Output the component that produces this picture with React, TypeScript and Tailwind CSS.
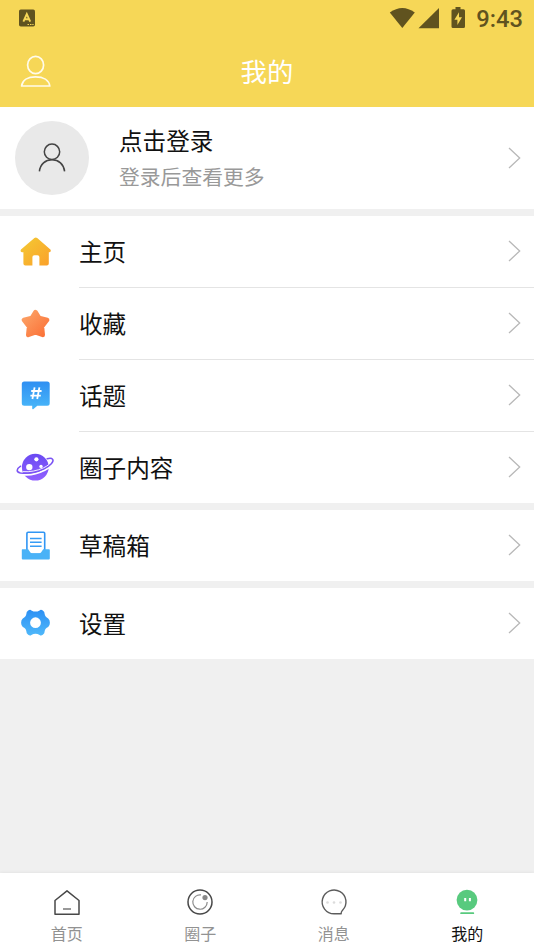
import type { ReactNode } from "react"

function Chevron() {
  return (
    <svg className="mr-[13px] mb-px shrink-0" width="14" height="24" viewBox="0 0 14 24" fill="none" stroke="#b8b8b8" strokeWidth="1.3">
      <path d="M2 2 L12.7 12 L2 22" />
    </svg>
  )
}

function HomeIcon() {
  return (
    <svg width="40" height="40" viewBox="0 0 40 40">
      <defs>
        <linearGradient id="home" x1="0" y1="0" x2="1" y2="1">
          <stop offset="0" stopColor="#f3cb34" />
          <stop offset="1" stopColor="#fb9f2a" />
        </linearGradient>
      </defs>
      <path
        fill="url(#home)"
        d="M18.4 6 Q19.8 4.8 21.2 6 L34.4 17.4 Q35.6 19.8 33.4 20.3 L32.8 20.3 V31.5 Q32.8 33.5 30.8 33.5 H23.4 V25 Q23.4 23.2 21.4 23.2 H18.4 Q16.4 23.2 16.4 25 V33.5 H9.4 Q7.4 33.5 7.4 31.5 V20.3 H6 Q3.8 19.8 5 17.4 Z"
      />
    </svg>
  )
}

function StarIcon() {
  return (
    <svg width="40" height="40" viewBox="0 0 40 40">
      <defs>
        <linearGradient id="star" x1="0" y1="0" x2="1" y2="1">
          <stop offset="0" stopColor="#fca468" />
          <stop offset="1" stopColor="#fb7036" />
        </linearGradient>
      </defs>
      <path
        fill="url(#star)"
        stroke="url(#star)"
        strokeWidth="4.4"
        strokeLinejoin="round"
        d="M19.5 8 L23.2 14 L31.2 16 L26 22.6 L26.8 31 L19.5 28.4 L12.2 31 L13 22.6 L7.8 16 L15.8 14 Z"
      />
    </svg>
  )
}

function TopicIcon() {
  return (
    <svg width="40" height="40" viewBox="0 0 40 40">
      <defs>
        <linearGradient id="topic" x1="0" y1="0" x2="0" y2="1">
          <stop offset="0" stopColor="#2f8ff2" />
          <stop offset="1" stopColor="#4ab8f9" />
        </linearGradient>
      </defs>
      <path
        fill="url(#topic)"
        d="M8.3 5.5 H31.2 Q33.7 5.5 33.7 8 V27.2 Q33.7 29.7 31.2 29.7 H21.3 L17.2 33.2 Q16.2 33.6 16.2 32.5 V29.7 H8.3 Q5.8 29.7 5.8 27.2 V8 Q5.8 5.5 8.3 5.5 Z"
      />
      <path d="M18.6 11.4 L16.4 23 M23.4 11.4 L21.2 23 M15.2 15 H25.6 M14.4 19.6 H24.8" stroke="#fff" strokeWidth="1.8" fill="none" />
    </svg>
  )
}

function PlanetIcon() {
  return (
    <svg width="40" height="40" viewBox="0 0 40 40">
      <defs>
        <linearGradient id="planet" x1="0" y1="0" x2="0" y2="1">
          <stop offset="0" stopColor="#6a4af2" />
          <stop offset="1" stopColor="#9160ff" />
        </linearGradient>
      </defs>
      <circle cx="19.3" cy="19.2" r="13.4" fill="url(#planet)" />
      {/* gap between the planet and its ring */}
      <path d="M4.4 26.2 C12 27.6 21 26 28.6 22.2 C31 21 33 19.6 34.6 18" fill="none" stroke="#fff" strokeWidth="2" />
      <path
        d="M4.6 18.2 C0.4 21 -0.2 24 4.4 24.9 C11 26 20 24.6 28 20.8 C34.4 17.7 38.2 13.4 36.7 11.4 C35.8 10.2 33.6 10 31.2 10.8"
        fill="none"
        stroke="#7b54f4"
        strokeWidth="1.5"
        strokeLinecap="round"
      />
      <path d="M6.8 23.6 C14 24.2 21 22.8 27.4 19.9 C29.5 18.9 31.4 17.8 32.8 16.6" fill="none" stroke="#fff" strokeWidth="0.9" />
      <circle cx="13.3" cy="19.1" r="3.2" fill="#fff" />
      <circle cx="20.4" cy="11.3" r="2.1" fill="#fff" />
      <circle cx="25" cy="18.4" r="1.7" fill="#fff" />
    </svg>
  )
}

function DraftIcon() {
  return (
    <svg width="40" height="40" viewBox="0 0 40 40">
      <rect x="10.9" y="6.2" width="17.8" height="22" rx="1.2" fill="#fff" stroke="#3196f4" strokeWidth="1.6" />
      <path d="M14 12.5 H25.6 M14 16.3 H25.6 M14 20.3 H25.6" stroke="#369cf5" strokeWidth="1.6" />
      <path fill="#49b2f7" d="M6.4 23.2 H12.2 L14.4 26.5 Q15 27.2 16 27.2 H23.4 Q24.4 27.2 25 26.5 L27.2 23.2 H33 Q33.8 23.2 33.8 24 V32.4 Q33.8 33.4 32.8 33.4 H6.8 Q5.8 33.4 5.8 32.4 V24 Q5.8 23.2 6.4 23.2 Z" />
    </svg>
  )
}

function GearIcon() {
  return (
    <svg width="40" height="40" viewBox="0 0 40 40">
      <defs>
        <linearGradient id="gear" x1="0" y1="0" x2="0" y2="1">
          <stop offset="0" stopColor="#2c90f4" />
          <stop offset="1" stopColor="#4fb8fa" />
        </linearGradient>
      </defs>
      <path
        fill="url(#gear)"
        fillRule="evenodd"
        d="M12.2 6.6 Q14 5.2 15.4 6.4 Q19.5 8.8 23.6 6.4 Q25 5.2 26.8 6.6 Q28.8 7.8 28.6 9.8 Q29 13.2 32.2 14.4 Q33.9 15.8 33.9 18.7 Q33.9 21.6 32.2 23 Q29 24.2 28.6 27.6 Q28.8 29.6 26.8 30.8 Q25 32.2 23.6 31 Q19.5 28.6 15.4 31 Q14 32.2 12.2 30.8 Q10.2 29.6 10.4 27.6 Q10 24.2 6.8 23 Q5.1 21.6 5.1 18.7 Q5.1 15.8 6.8 14.4 Q10 13.2 10.4 9.8 Q10.2 7.8 12.2 6.6 Z M19.5 13.3 A5.4 5.4 0 1 0 19.5 24.1 A5.4 5.4 0 1 0 19.5 13.3 Z"
      />
    </svg>
  )
}

function Row({ icon, label, line }: { icon: ReactNode; label: string; line?: boolean }) {
  return (
    <div className="flex h-[72px] items-stretch bg-white pl-4">
      <div className="flex w-[63px] items-center">{icon}</div>
      <div className={line ? "flex flex-1 items-center justify-between border-b border-[#e4e4e4]" : "flex flex-1 items-center justify-between border-b border-transparent"}>
        <span className="mb-0.5 text-[23.6px] leading-8 text-[#111]">{label}</span>
        <Chevron />
      </div>
    </div>
  )
}

function Tab({ icon, label, active }: { icon: ReactNode; label: string; active?: boolean }) {
  return (
    <div className="flex flex-1 flex-col items-center pt-[13px]">
      {icon}
      <span className={active ? "mt-[3px] text-[16px] leading-6 text-[#111]" : "mt-[3px] text-[16px] leading-6 text-[#929292]"}>{label}</span>
    </div>
  )
}

export default function App() {
  return (
    <div className="flex h-[950px] w-[534px] flex-col overflow-hidden bg-[#f0f0f0] font-['Noto_Sans_CJK_SC',sans-serif]">
      {/* status bar + title */}
      <header className="h-[107px] bg-[#f6d757]">
        <div className="flex h-9 items-center justify-between pl-[19px] pr-3">
          <svg width="17" height="18" viewBox="0 0 17 18">
            <rect x="0" y="0.5" width="16" height="17" rx="1.8" fill="#60531f" />
            <path d="M4.4 12.7 L7.8 5 L11.2 12.7 M5.6 10.3 H10" stroke="#f6d757" strokeWidth="1.9" fill="none" />
            <path d="M8.5 15.5 H10 M11 15.5 H12.5 M13.3 15.5 H14.6" stroke="#f6d757" strokeWidth="1.1" />
          </svg>
          <div className="flex items-center">
            <svg width="78" height="24" viewBox="0 0 78 24" fill="#60531f">
              <path d="M0.8 6.6 Q13.3 -2.6 25.8 6.6 L13.3 22 Z" />
              <path d="M50 2 V22.2 H29.5 Z" />
              <path fillRule="evenodd" d="M66.5 1 H71.5 V3.3 H74.5 Q76 3.3 76 4.8 V20.4 Q76 21.9 74.5 21.9 H64 Q62.5 21.9 62.5 20.4 V4.8 Q62.5 3.3 64 3.3 H66.5 Z M70 6.2 L65.4 13.7 H68.4 V19 L73 11.2 H70 Z" />
            </svg>
            <span className="-mr-px mt-0.5 ml-[9px] font-['Roboto',sans-serif] text-[23.7px] font-medium leading-9 text-[#60531f]">9:43</span>
          </div>
        </div>
        <div className="grid h-[71px] grid-cols-3 items-center pl-5">
          <svg width="32" height="34" viewBox="0 0 32 34" fill="none" stroke="#fffbea" strokeWidth="1.7">
            <ellipse cx="15.6" cy="10" rx="8" ry="8.6" />
            <path d="M1.6 31 C2.2 25 8 21.8 15.6 21.8 C23.2 21.8 29 25 29.8 31 Z" strokeLinejoin="round" />
          </svg>
          <span className="mb-0.5 -ml-5 text-center text-[26.4px] leading-9 text-white">我的</span>
        </div>
      </header>

      {/* login */}
      <section className="flex h-[102px] items-center bg-white pl-[15px]">
        <div className="mb-px flex size-[74px] items-center justify-center rounded-full bg-[#e9e9e9]">
          <svg width="30" height="32" viewBox="0 0 30 32" fill="none" stroke="#444" strokeWidth="1.5">
            <circle cx="15" cy="9.8" r="7.7" />
            <path d="M2.4 29.3 C3.2 22.2 8.4 17.7 15 17.7 C21.6 17.7 26.8 22.2 27.6 29.3" />
          </svg>
        </div>
        <div className="ml-[30px] flex flex-1 flex-col">
          <span className="-mt-px text-[23.6px] leading-9 text-[#111]">点击登录</span>
          <span className="text-[20.8px] leading-9 text-[#999]">登录后查看更多</span>
        </div>
        <Chevron />
      </section>

      {/* menu */}
      <section className="mt-[7px] h-[287px] overflow-hidden">
        <Row icon={<HomeIcon />} label="主页" line />
        <Row icon={<StarIcon />} label="收藏" line />
        <Row icon={<TopicIcon />} label="话题" line />
        <Row icon={<PlanetIcon />} label="圈子内容" />
      </section>
      <section className="mt-[7px] h-[71px] overflow-hidden">
        <Row icon={<DraftIcon />} label="草稿箱" />
      </section>
      <section className="mt-[7px] h-[71px] overflow-hidden">
        <Row icon={<GearIcon />} label="设置" />
      </section>

      {/* tabs */}
      <nav className="mt-auto flex h-[77px] bg-white shadow-[0_-1px_3px_rgba(0,0,0,0.05)]">
        <Tab
          label="首页"
          icon={
            <svg width="32" height="32" viewBox="0 0 32 32" fill="none" stroke="#484848" strokeWidth="1.5" strokeLinejoin="round">
              <path d="M16 4.8 L28 14.5 V28.2 H4 V14.5 Z" />
              <path d="M12 23 H20" stroke="#777" />
            </svg>
          }
        />
        <Tab
          label="圈子"
          icon={
            <svg width="32" height="32" viewBox="0 0 32 32" fill="none" stroke="#484848" strokeWidth="1.5">
              <circle cx="16" cy="16" r="12" />
              <path d="M17 8.9 A7.2 7.2 0 1 0 23.2 16" stroke="#8a8a8a" strokeWidth="1.2" />
              <circle cx="21" cy="11.6" r="2.6" fill="#888" stroke="none" />
            </svg>
          }
        />
        <Tab
          label="消息"
          icon={
            <svg width="32" height="32" viewBox="0 0 32 32" fill="none" stroke="#5c5c5c" strokeWidth="1.4">
              <path d="M23.2 27.8 H16 A11.9 11.9 0 1 1 24.4 24.4 Q22.8 26.4 23.2 27.8 Z" strokeLinejoin="round" />
              <g fill="#dcdcdc" stroke="none">
                <circle cx="9.5" cy="16.5" r="1.3" />
                <circle cx="16" cy="16.5" r="1.3" />
                <circle cx="22.5" cy="16.5" r="1.3" />
              </g>
            </svg>
          }
        />
        <Tab
          label="我的"
          active
          icon={
            <svg width="32" height="32" viewBox="0 0 32 32" fill="#58ca7e">
              <circle cx="16" cy="14.1" r="10.4" />
              <rect x="9.2" y="26.3" width="14" height="1.8" rx="0.9" />
              <path d="M14.2 12 V15.2 M18.9 12 V15.2" stroke="#fff" strokeWidth="2" />
            </svg>
          }
        />
      </nav>
    </div>
  )
}
